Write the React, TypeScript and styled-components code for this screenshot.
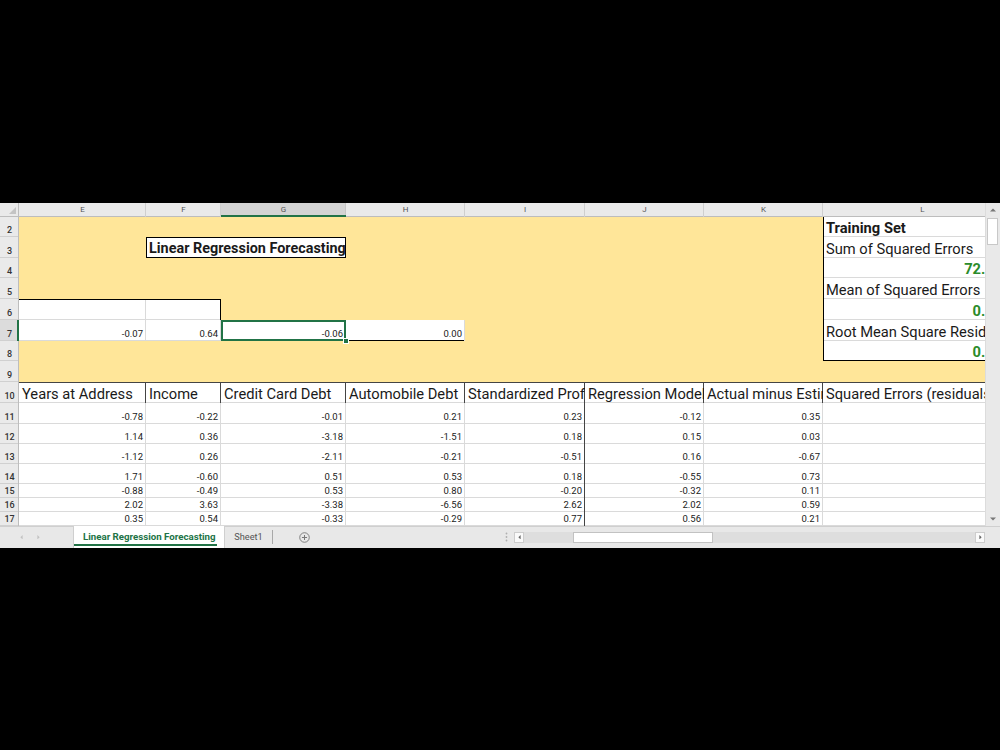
import { Fragment } from "react";
import styled, { createGlobalStyle } from "styled-components";

const YELLOW = "#ffe699";
const WHITE = "#ffffff";
const GRID = "#dadada";
const DARK = "#444444";
const BLACK = "#000000";
const GREEN = "#217346";
const VALUE_GREEN = "#2b8c2b";

const GlobalStyle = createGlobalStyle`
  html, body {
    margin: 0;
    padding: 0;
    background: #000;
  }
  body {
    font-family: Roboto, "Liberation Sans", Arial, sans-serif;
  }
`;

const Page = styled.div`
  width: 1000px;
  height: 750px;
  box-sizing: border-box;
  padding-top: 203px;
  background: #000;
`;

const Window = styled.div`
  display: grid;
  grid-template-columns: 985px 15px;
  grid-template-rows: 323px 22px;
  background: #fff;
`;

const Viewport = styled.div`
  overflow: hidden;
`;

const Sheet = styled.div`
  display: grid;
  grid-template-columns: 19px 127px 75px 125px 119px 120px 119px 119px 199px;
  grid-template-rows: 14px 20px 21px 20px 21px 21px 21px 20px 21px 21px 21px 20px 20px 20px 14px 14px 14px;
`;

const Corner = styled.div`
  position: relative;
  background: #eaeaea;
  box-shadow: inset -1px 0 0 #bdbdbd, inset 0 -1px 0 #bdbdbd;

  &::after {
    content: "";
    position: absolute;
    right: 3px;
    bottom: 3px;
    border-style: solid;
    border-width: 0 0 7px 7px;
    border-color: transparent transparent #c4c4c4 transparent;
  }
`;

const ColHead = styled.div<{ $sel?: boolean }>`
  display: flex;
  align-items: center;
  justify-content: center;
  overflow: hidden;
  background: ${(p) => (p.$sel ? "#d4d4d4" : "#eaeaea")};
  box-shadow: ${(p) =>
    p.$sel
      ? `inset 0 -2px 0 ${GREEN}, inset -1px 0 0 #c6c6c6`
      : "inset -1px 0 0 #cfcfcf, inset 0 -1px 0 #bdbdbd"};
  color: #555;
  font-size: 8px;
  line-height: 14px;
`;

const RowHead = styled.div<{ $sel?: boolean }>`
  display: flex;
  align-items: flex-end;
  justify-content: center;
  padding-bottom: 2px;
  box-sizing: border-box;
  background: ${(p) => (p.$sel ? "#dcdcdc" : "#eaeaea")};
  box-shadow: ${(p) =>
    p.$sel
      ? `inset -2px 0 0 ${GREEN}, inset 0 -1px 0 #d0d0d0`
      : "inset -1px 0 0 #bdbdbd, inset 0 -1px 0 #d0d0d0"};
  color: #333;
  font-size: 9px;
  font-weight: 500;
  line-height: 10px;
`;

type CellProps = {
  $fill: string;
  $right?: boolean;
  $bold?: boolean;
  $green?: boolean;
  $big?: boolean;
  $title?: boolean;
  $span?: number;
  $bt?: string;
  $br?: string;
  $bb?: string;
  $bl?: string;
  $sel?: boolean;
};

function edges(p: CellProps) {
  const white = p.$fill === WHITE;
  const right = p.$br ?? (white ? GRID : undefined);
  const bottom = p.$bb ?? (white ? GRID : undefined);
  const list = [
    p.$sel && `inset 0 0 0 2px ${GREEN}`,
    p.$bl && `inset 1px 0 0 ${p.$bl}`,
    p.$bt && `inset 0 1px 0 ${p.$bt}`,
    right && `inset -1px 0 0 ${right}`,
    bottom && `inset 0 -1px 0 ${bottom}`,
  ].filter(Boolean);
  return list.length ? list.join(", ") : "none";
}

const Cell = styled.div<CellProps>`
  position: relative;
  z-index: ${(p) => (p.$sel ? 1 : 0)};
  grid-column: span ${(p) => p.$span ?? 1};
  display: flex;
  align-items: flex-end;
  justify-content: ${(p) => (p.$right ? "flex-end" : "flex-start")};
  box-sizing: border-box;
  padding: ${(p) => (p.$big ? "0 3px 1px 3px" : "0 3px 2px 3px")};
  overflow: ${(p) => (p.$sel ? "visible" : "hidden")};
  white-space: nowrap;
  background: ${(p) => p.$fill};
  box-shadow: ${(p) => edges(p)};
  color: ${(p) => (p.$green ? VALUE_GREEN : "#1a1a1a")};
  font-size: ${(p) => (p.$title ? "14.4px" : p.$big ? "14.7px" : "9.5px")};
  line-height: ${(p) => (p.$big ? "16px" : "11px")};
  font-weight: ${(p) => (p.$bold ? 700 : 400)};
`;

const Handle = styled.span`
  position: absolute;
  right: -3px;
  bottom: -3px;
  width: 4px;
  height: 4px;
  background: ${GREEN};
  border: 1px solid #fff;
`;

/* ---------- vertical scrollbar ---------- */

const VScroll = styled.div`
  display: flex;
  flex-direction: column;
  background: #e9e9e9;
  box-shadow: inset 1px 0 0 #dcdcdc;
`;

const ArrowBox = styled.div`
  display: flex;
  align-items: center;
  justify-content: center;
  height: 14px;
  color: #777;
`;

const VTrack = styled.div`
  flex: 1;
  padding: 1px 2px 0 2px;
`;

const VThumb = styled.div`
  height: 27px;
  background: #fff;
  border: 1px solid #c8c8c8;
  box-sizing: border-box;
`;

/* ---------- tab bar ---------- */

const TabBar = styled.div`
  grid-column: 1 / -1;
  display: flex;
  align-items: stretch;
  background: #e8e8e8;
  box-shadow: inset 0 1px 0 #cfcfcf;
  font-size: 9.7px;
`;

const TabNav = styled.div`
  width: 73px;
  display: flex;
  align-items: center;
  gap: 14px;
  padding-left: 20px;
  box-sizing: border-box;
  color: #c2c2c2;
`;

const Tab = styled.div<{ $active?: boolean }>`
  position: relative;
  display: flex;
  align-items: center;
  justify-content: ${(p) => (p.$active ? "flex-start" : "center")};
  width: ${(p) => (p.$active ? "152px" : "47px")};
  box-sizing: border-box;
  padding-left: ${(p) => (p.$active ? "10px" : "0")};
  padding-bottom: 2px;
  background: ${(p) => (p.$active ? "#fff" : "transparent")};
  box-shadow: ${(p) => (p.$active ? "inset 1px 0 0 #cfcfcf, inset -1px 0 0 #cfcfcf" : "none")};
  color: ${(p) => (p.$active ? GREEN : "#555")};
  font-weight: ${(p) => (p.$active ? 700 : 400)};
  font-size: ${(p) => (p.$active ? "9.7px" : "9.2px")};

  &::after {
    content: "";
    display: ${(p) => (p.$active ? "block" : "none")};
    position: absolute;
    left: 1px;
    right: 8px;
    bottom: 2px;
    height: 2px;
    background: ${GREEN};
  }
`;

const TabSep = styled.div`
  width: 1px;
  margin: 4px 0 4px 0;
  background: #a8a8a8;
`;

const AddTab = styled.div`
  width: 62px;
  display: flex;
  align-items: center;
  justify-content: center;
`;

const Spacer = styled.div`
  flex: 1;
`;

const Dots = styled.div`
  width: 12px;
  margin-right: 2px;
  display: flex;
  align-items: center;
  justify-content: center;
`;

const HScroll = styled.div`
  width: 471px;
  margin-right: 15px;
  display: flex;
  align-items: center;
`;

const HBtn = styled.div`
  width: 10px;
  height: 11px;
  box-sizing: border-box;
  display: flex;
  align-items: center;
  justify-content: center;
  background: #fafafa;
  border: 1px solid #cdcdcd;
  color: #666;
`;

const HTrack = styled.div`
  flex: 1;
  height: 11px;
  background: #dedede;
  display: flex;
  align-items: center;
  padding-left: 49px;
`;

const HThumb = styled.div`
  width: 140px;
  height: 11px;
  box-sizing: border-box;
  background: #fff;
  border: 1px solid #c2c2c2;
`;

/* ---------- data ---------- */

type Spec = {
  t?: string;
  fill?: "y" | "w";
  right?: boolean;
  bold?: boolean;
  green?: boolean;
  big?: boolean;
  title?: boolean;
  span?: number;
  bt?: string;
  br?: string;
  bb?: string;
  bl?: string;
  sel?: boolean;
};

const y: Spec = { fill: "y" };
const ys = (n: number): Spec[] => Array.from({ length: n }, () => y);

const COLUMNS = ["E", "F", "G", "H", "I", "J", "K", "L"];

const HEADERS = [
  "Years at Address",
  "Income",
  "Credit Card Debt",
  "Automobile Debt",
  "Standardized Profit",
  "Regression Model",
  "Actual minus Estimate",
  "Squared Errors (residuals)",
];

const NUMBERS: string[][] = [
  ["-0.78", "-0.22", "-0.01", "0.21", "0.23", "-0.12", "0.35"],
  ["1.14", "0.36", "-3.18", "-1.51", "0.18", "0.15", "0.03"],
  ["-1.12", "0.26", "-2.11", "-0.21", "-0.51", "0.16", "-0.67"],
  ["1.71", "-0.60", "0.51", "0.53", "0.18", "-0.55", "0.73"],
  ["-0.88", "-0.49", "0.53", "0.80", "-0.20", "-0.32", "0.11"],
  ["2.02", "3.63", "-3.38", "-6.56", "2.62", "2.02", "0.59"],
  ["0.35", "0.54", "-0.33", "-0.29", "0.77", "0.56", "0.21"],
];

const label = (t: string): Spec => ({ t, big: true, bl: BLACK });
const metric = (t: string, extra: Spec = {}): Spec => ({
  t,
  right: true,
  green: true,
  bold: true,
  big: true,
  bl: BLACK,
  ...extra,
});

const ROWS: Record<number, Spec[]> = {
  2: [...ys(7), { t: "Training Set", bold: true, big: true, bl: BLACK }],
  3: [
    y,
    {
      t: "Linear Regression Forecasting",
      span: 2,
      bold: true,
      big: true,
      title: true,
      bt: BLACK,
      br: BLACK,
      bb: BLACK,
      bl: BLACK,
    },
    ...ys(4),
    label("Sum of Squared Errors"),
  ],
  4: [...ys(7), metric("72.1365")],
  5: [...ys(7), label("Mean of Squared Errors")],
  6: [{ bt: BLACK }, { bt: BLACK, br: BLACK }, ...ys(5), metric("0.3512")],
  7: [
    { t: "-0.07", right: true },
    { t: "0.64", right: true },
    { t: "-0.06", right: true, sel: true },
    { t: "0.00", right: true, bb: BLACK },
    ...ys(3),
    label("Root Mean Square Residuals"),
  ],
  8: [...ys(7), metric("0.0593", { bb: BLACK })],
  9: ys(8),
  10: HEADERS.map((t) => ({ t, big: true, bt: DARK, br: DARK })),
};

NUMBERS.forEach((row, i) => {
  ROWS[11 + i] = [
    ...row.map((t, c) => ({ t, right: true, br: c === 4 ? DARK : undefined })),
    {},
  ];
});

const ROW_NUMBERS = Array.from({ length: 16 }, (_, i) => i + 2);

function Triangle({ dir, size = 4 }: { dir: "up" | "down" | "left" | "right"; size?: number }) {
  const pts = {
    up: "0,4 4,0 8,4",
    down: "0,0 8,0 4,4",
    left: "4,0 4,8 0,4",
    right: "0,0 4,4 0,8",
  }[dir];
  const vertical = dir === "up" || dir === "down";
  return (
    <svg
      width={vertical ? size * 1.5 : size}
      height={vertical ? size : size * 1.5}
      viewBox={vertical ? "0 0 8 4" : "0 0 4 8"}
    >
      <polygon points={pts} fill="currentColor" />
    </svg>
  );
}

function PlusCircle() {
  return (
    <svg width="11" height="11" viewBox="0 0 12 12">
      <circle cx="6" cy="6" r="5.2" fill="none" stroke="#777" strokeWidth="1" />
      <path d="M6 3.2v5.6M3.2 6h5.6" stroke="#777" strokeWidth="1.1" />
    </svg>
  );
}

function VerticalDots() {
  return (
    <svg width="3" height="10" viewBox="0 0 3 10">
      <circle cx="1.5" cy="1.5" r="0.9" fill="#b0b0b0" />
      <circle cx="1.5" cy="5" r="0.9" fill="#b0b0b0" />
      <circle cx="1.5" cy="8.5" r="0.9" fill="#b0b0b0" />
    </svg>
  );
}

export default function App() {
  return (
    <>
      <GlobalStyle />
      <Page>
        <Window>
          <Viewport>
            <Sheet>
              <Corner />
              {COLUMNS.map((c) => (
                <ColHead key={c} $sel={c === "G"}>
                  {c}
                </ColHead>
              ))}

              {ROW_NUMBERS.map((r) => (
                <Fragment key={r}>
                  <RowHead $sel={r === 7}>{r}</RowHead>
                  {ROWS[r].map((c, i) => (
                    <Cell
                      key={i}
                      $fill={c.fill === "y" ? YELLOW : WHITE}
                      $right={c.right}
                      $bold={c.bold}
                      $green={c.green}
                      $big={c.big}
                      $title={c.title}
                      $span={c.span}
                      $bt={c.bt}
                      $br={c.br}
                      $bb={c.bb}
                      $bl={c.bl}
                      $sel={c.sel}
                    >
                      {c.t}
                      {c.sel && <Handle />}
                    </Cell>
                  ))}
                </Fragment>
              ))}
            </Sheet>
          </Viewport>

          <VScroll>
            <ArrowBox>
              <Triangle dir="up" />
            </ArrowBox>
            <VTrack>
              <VThumb />
            </VTrack>
            <ArrowBox>
              <Triangle dir="down" />
            </ArrowBox>
          </VScroll>

          <TabBar>
            <TabNav>
              <Triangle dir="left" size={3} />
              <Triangle dir="right" size={3} />
            </TabNav>
            <Tab $active>Linear Regression Forecasting</Tab>
            <Tab>Sheet1</Tab>
            <TabSep />
            <AddTab>
              <PlusCircle />
            </AddTab>
            <Spacer />
            <Dots>
              <VerticalDots />
            </Dots>
            <HScroll>
              <HBtn>
                <Triangle dir="left" size={3} />
              </HBtn>
              <HTrack>
                <HThumb />
              </HTrack>
              <HBtn>
                <Triangle dir="right" size={3} />
              </HBtn>
            </HScroll>
          </TabBar>
        </Window>
      </Page>
    </>
  );
}
